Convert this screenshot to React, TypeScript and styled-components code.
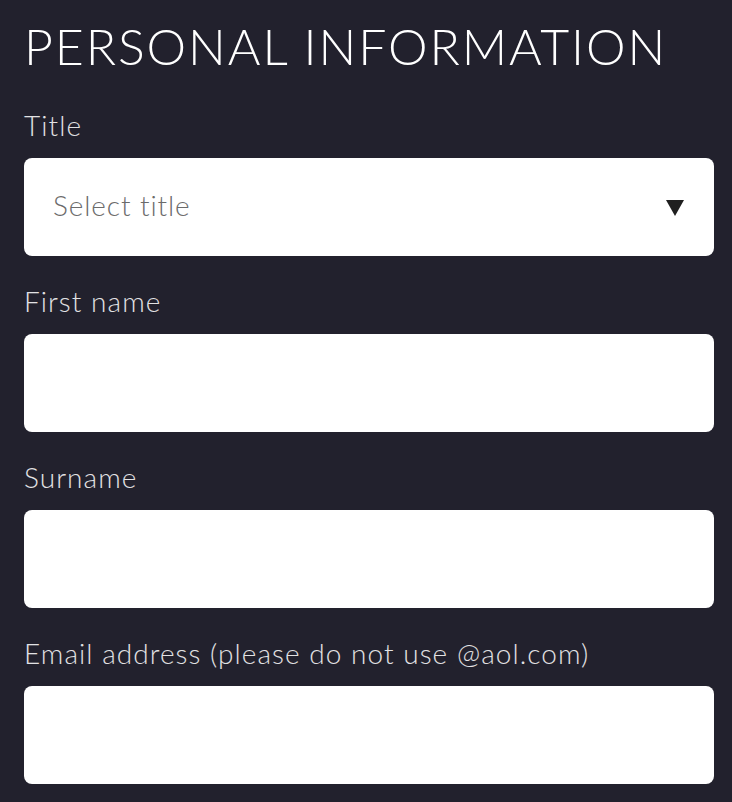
import React from "react";
import styled, { createGlobalStyle } from "styled-components";

const Global = createGlobalStyle`
  html, body { margin: 0; padding: 0; background: #22212d; }
  body { font-family: Lato, "Open Sans", sans-serif; }
`;

const Page = styled.div`
  min-height: 802px;
  background: #22212d;
  padding: 21px 18px 0 24px;
  box-sizing: border-box;
  display: flex;
  flex-direction: column;
`;

const Heading = styled.h1`
  margin: 0 0 36px;
  font-size: 50px;
  line-height: 50px;
  font-weight: 300;
  color: #ffffff;
  letter-spacing: 1.9px;
  white-space: nowrap;
`;

const Form = styled.form`
  display: flex;
  flex-direction: column;
  gap: 27px;
`;

const Field = styled.div`
  display: flex;
  flex-direction: column;
`;

const Label = styled.label`
  font-size: 28px;
  line-height: 36px;
  font-weight: 300;
  color: #e2e2e4;
  letter-spacing: 1.05px;
  margin-bottom: 15px;
`;

const Box = styled.div`
  height: 98px;
  background: #ffffff;
  border-radius: 8px;
  display: flex;
  align-items: center;
  padding: 0 30px 0 29px;
  box-sizing: border-box;
`;

const Placeholder = styled.span`
  flex: 1;
  font-size: 28px;
  font-weight: 300;
  color: #6b6b6b;
  letter-spacing: 0.9px;
  margin-top: -4px;
`;

const Arrow = styled.span`
  width: 0;
  height: 0;
  border-left: 9px solid transparent;
  border-right: 9px solid transparent;
  border-top: 16px solid #1f1f1f;
  margin-top: 2px;
`;

const fields = ["First name", "Surname", "Email address (please do not use @aol.com)"];

export default function App() {
  return (
    <>
      <Global />
      <Page>
        <Heading>PERSONAL INFORMATION</Heading>
        <Form>
          <Field>
            <Label>Title</Label>
            <Box>
              <Placeholder>Select title</Placeholder>
              <Arrow />
            </Box>
          </Field>
          {fields.map((f) => (
            <Field key={f}>
              <Label>{f}</Label>
              <Box />
            </Field>
          ))}
        </Form>
      </Page>
    </>
  );
}
